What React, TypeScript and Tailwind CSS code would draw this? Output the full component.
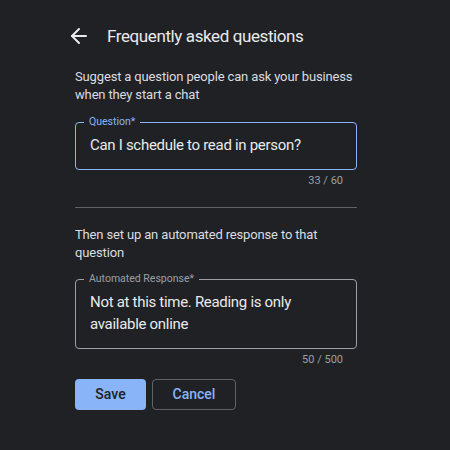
import {ArrowLeft} from 'lucide-react';

const font = {fontFamily: 'Roboto, "Noto Sans", sans-serif'};

const App = () => {
  return (
    <div className="min-h-screen bg-[#202124] text-[#e8eaed]" style={font}>
      <div className="w-[282px] ml-[75px] pt-6">
        <div className="flex items-center h-6 -ml-2">
          <ArrowLeft className="h-6 w-6 text-[#e8eaed]" strokeWidth={2} />
          <h1 className="ml-4 text-[17px] leading-6 font-normal tracking-[-0.4px]">Frequently asked questions</h1>
        </div>

        <p className="mt-5 text-[13px] leading-[18px] text-[#dadce0] tracking-[-0.15px]">
          Suggest a question people can ask your business when they start a chat
        </p>

        <fieldset className="mt-3 border border-[#8ab4f8] rounded px-[14px] pb-3">
          <legend className="-ml-[6px] px-[5px] text-[10.5px] leading-3 text-[#8ab4f8]">Question*</legend>
          <div className="pt-[5px] text-[15px] leading-6 tracking-[-0.3px] text-[#e8eaed]">Can I schedule to read in person?</div>
        </fieldset>
        <div className="mt-1 pr-[14px] text-right text-[11px] leading-[14px] text-[#9aa0a6]">33 / 60</div>

        <div className="mt-[19px] h-px bg-[#5f6368]" />

        <p className="mt-[18px] text-[13px] leading-[18px] text-[#dadce0] tracking-[-0.15px]">
          Then set up an automated response to that question
        </p>

        <fieldset className="mt-[11px] border border-[#9aa0a6] rounded px-[14px] pb-[13px]">
          <legend className="-ml-[6px] px-[5px] text-[10.5px] leading-3 text-[#9aa0a6]">Automated Response*</legend>
          <div className="pt-[6px] text-[15px] leading-[22px] tracking-[-0.3px] text-[#e8eaed]">
            Not at this time. Reading is only available online
          </div>
        </fieldset>
        <div className="mt-1 pr-[14px] text-right text-[11px] leading-[14px] text-[#9aa0a6]">50 / 500</div>

        <div className="mt-3 flex gap-[6px]">
          <button className="w-[71px] h-[31px] rounded bg-[#8ab4f8] text-[#202124] text-[14px] font-medium">
            Save
          </button>
          <button className="w-[84px] h-[31px] rounded border border-[#5f6368] text-[#8ab4f8] text-[14px] font-medium">
            Cancel
          </button>
        </div>
      </div>
    </div>
  );
};

export default App;
